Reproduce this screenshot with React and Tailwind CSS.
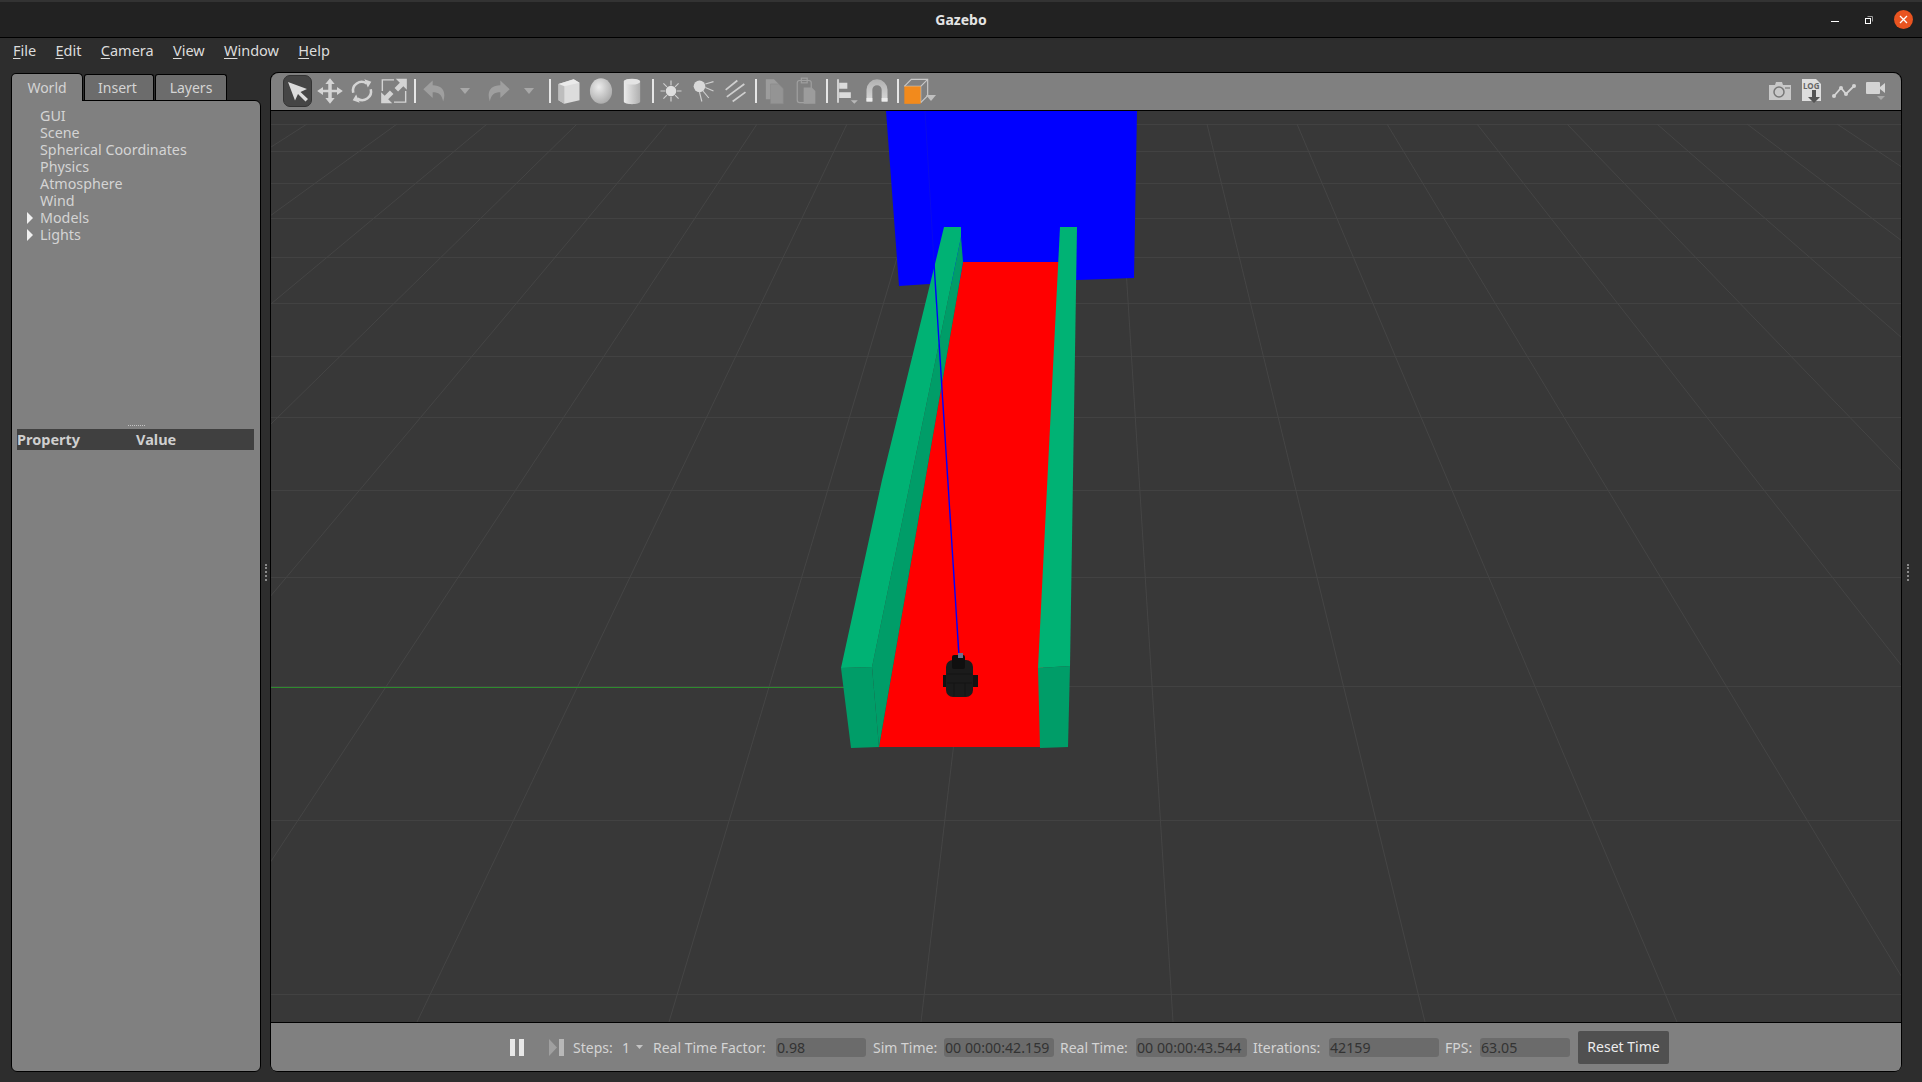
const FONT = "font-['Noto_Sans','Open_Sans',sans-serif]";

const HLINES = [124, 151, 183, 218, 257, 303, 356, 417, 490, 577, 686, 820, 994];
const RADIAL = Array.from({ length: 20 }, (_, i) => i - 10);

const MENU = [
  ["F", "ile"],
  ["E", "dit"],
  ["C", "amera"],
  ["V", "iew"],
  ["W", "indow"],
  ["H", "elp"],
];
const TREE = ["GUI", "Scene", "Spherical Coordinates", "Physics", "Atmosphere", "Wind"];

const Sep = ({ className }) => <div className={`w-[2px] h-[24px] bg-[#e6e6e6] ${className}`} />;

const Caret = ({ className, fill = "#a8a8a8" }) => (
  <svg className={className} width="10" height="6" viewBox="0 0 10 6">
    <path d="M0 0h10L5 6z" fill={fill} />
  </svg>
);

const Icon = ({ children, className = "" }) => (
  <svg className={`shrink-0 ${className}`} width="28" height="28" viewBox="0 0 24 24">
    {children}
  </svg>
);

const Toolbar = () => (
  <div className="h-[38px] shrink-0 flex items-center bg-[#808080] border-b border-black rounded-t-[8px] pl-[12px] pb-[1px]">
    {/* select */}
    <div className="w-[29px] h-[32px] rounded-[7px] bg-[#454545] border border-[#333] flex items-center justify-center">
      <svg width="24" height="24" viewBox="0 0 24 24">
        <path d="M2 3l19 7-6.500 3L22 20l-2.500 2.500-7.500-7.500-3 6.500z" fill="#dcdcdc" />
      </svg>
    </div>
    {/* move */}
    <Icon className="ml-[4px]">
      <path d="M12 1l4 5h-2.500v5H18V8.500l5 3.500-5 3.500V13h-4.500v5H16l-4 5-4-5h2.500v-5H6v2.500L1 12l5-3.500V11h4.500V6H8z" fill="#d4d4d4" />
    </Icon>
    {/* rotate */}
    <Icon className="ml-[4px]">
      <path d="M4.500 13.500A7.500 7.500 0 0 1 16 5.500M19.500 10.500A7.500 7.500 0 0 1 8 18.500" fill="none" stroke="#d4d4d4" strokeWidth="2.200" />
      <path d="M14 2l6 2-3 5zM10 22l-6-2 3-5z" fill="#d4d4d4" />
    </Icon>
    {/* scale */}
    <Icon className="ml-[4px]">
      <path d="M2 12V2.500h10M22 12v9.500H12" fill="none" stroke="#d4d4d4" strokeWidth="1.200" />
      <path d="M13.500 1.500H23v9.500l-3-3-4.500 4.500-3-3L17 5z M10.500 22.500H1V13l3 3 4.500-4.500 3 3L7 19z" fill="#d4d4d4" />
    </Icon>
    <Sep className="ml-[6px]" />
    {/* undo */}
    <Icon className="ml-[5px] opacity-60">
      <path d="M10 3L2 10.500 10 18v-5c5 0 8 2 9 8 3-9-1-14-9-14z" fill="#b4b4b4" />
    </Icon>
    <Caret className="ml-[11px]" />
    {/* redo */}
    <Icon className="ml-[14px] opacity-60">
      <path d="M14 3l8 7.500L14 18v-5c-5 0-8 2-9 8-3-9 1-14 9-14z" fill="#b4b4b4" />
    </Icon>
    <Caret className="ml-[12px]" />
    <Sep className="ml-[15px]" />
    {/* box */}
    <Icon className="ml-[4px]">
      <path d="M3 6l13-4 5 3v15l-13 3-5-3z" fill="#dcdcdc" />
      <path d="M3 6l13-4 5 3-13 3z" fill="#eaeaea" />
      <path d="M3 6l5 2v15l-5-3z" fill="#bdbdbd" />
    </Icon>
    {/* sphere */}
    <svg className="ml-[4px] shrink-0" width="28" height="28" viewBox="0 0 24 24">
      <defs>
        <radialGradient id="sph" cx="0.4" cy="0.35" r="0.7">
          <stop offset="0" stopColor="#ececec" />
          <stop offset="1" stopColor="#a8a8a8" />
        </radialGradient>
      </defs>
      <ellipse cx="12" cy="12" rx="9.500" ry="11" fill="url(#sph)" />
    </svg>
    {/* cylinder */}
    <svg className="ml-[3px] shrink-0" width="28" height="28" viewBox="0 0 24 24">
      <defs>
        <linearGradient id="cyl" x1="0" x2="1" y1="0" y2="0">
          <stop offset="0" stopColor="#ececec" />
          <stop offset="1" stopColor="#b0b0b0" />
        </linearGradient>
      </defs>
      <path d="M5 4c0-3 14-3 14 0v17c0 3-14 3-14 0z" fill="url(#cyl)" />
      <ellipse cx="12" cy="4" rx="7" ry="2.500" fill="#e4e4e4" />
    </svg>
    <Sep className="ml-[6px]" />
    {/* point light */}
    <Icon className="ml-[3px]">
      <circle cx="12" cy="12" r="4.500" fill="#dedede" />
      <path d="M12 3v4M12 17v4M3 12h4M17 12h4M5.500 5.500l3 3M15.500 15.500l3 3M18.500 5.500l-3 3M8.500 15.500l-3 3" stroke="#cfcfcf" strokeWidth="1" />
    </Icon>
    {/* spot light */}
    <Icon className="ml-[4px]">
      <circle cx="9" cy="8" r="5" fill="#d8d8d8" />
      <path d="M14 6l7-2M14 9l7 3M12 12l5 6M9 13l2 8" stroke="#cfcfcf" strokeWidth="1" />
    </Icon>
    {/* directional light */}
    <Icon className="ml-[4px]">
      <path d="M4 11L14 3M5 17L20 6M10 21L21 13" stroke="#cfcfcf" strokeWidth="1.500" />
    </Icon>
    <Sep className="ml-[6px]" />
    {/* copy */}
    <Icon className="ml-[3px]">
      <path d="M5 2h7l4 4v13H5z" fill="#9c9c9c" />
      <path d="M9 6h7l4 4v13H9z" fill="#949494" stroke="#888" strokeWidth="0.500" />
    </Icon>
    {/* paste */}
    <Icon className="ml-[4px]">
      <rect x="4.500" y="3" width="12" height="19" rx="2" fill="none" stroke="#a0a0a0" strokeWidth="1" />
      <rect x="8" y="1" width="5" height="4" fill="none" stroke="#a0a0a0" strokeWidth="1" />
      <path d="M10 9h7l3 3v11H10z" fill="#9c9c9c" />
    </Icon>
    <Sep className="ml-[6px]" />
    {/* align */}
    <svg className="ml-[3px] shrink-0" width="28" height="28" viewBox="0 0 24 24">
      <path d="M6 2v20" stroke="#dcdcdc" strokeWidth="1.500" />
      <path d="M7 5h7v5H7zM7 13h10v5H7z" fill="#dcdcdc" />
      <path d="M17 20h6l-3 3z" fill="#b8b8b8" />
    </svg>
    {/* snap */}
    <svg className="ml-[4px] shrink-0" width="28" height="28" viewBox="0 0 24 24">
      <defs>
        <linearGradient id="mag" x1="0" x2="0" y1="0" y2="1">
          <stop offset="0" stopColor="#b0b0b0" />
          <stop offset="1" stopColor="#dadada" />
        </linearGradient>
      </defs>
      <path d="M3 21V11a9 9 0 0 1 18 0v10h-5V11a4 4 0 0 0-8 0v10z" fill="url(#mag)" />
      <path d="M3 21v-3h5v3zM16 21v-3h5v3z" fill="#ececec" />
    </svg>
    <Sep className="ml-[6px]" />
    {/* view angle */}
    <svg className="ml-[3px] shrink-0" width="28" height="28" viewBox="0 0 24 24">
      <path d="M2 8l6-6h14v14l-6 6" fill="none" stroke="#c8c8c8" strokeWidth="1" />
      <path d="M2 8h14l6-6M16 8v14" fill="none" stroke="#c8c8c8" strokeWidth="1" />
      <rect x="2" y="8" width="14" height="15" fill="#f28a1c" />
    </svg>
    <Caret className="ml-[-4px] mt-[14px]" fill="#c0c0c0" />
    {/* right side tools */}
    <svg className="ml-[832px] shrink-0" width="24" height="20" viewBox="0 0 24 20">
      <path d="M1 4h6l1-3h6l1 3h8v15H1z" fill="#c8c8c8" />
      <circle cx="11" cy="11" r="5" fill="none" stroke="#777" strokeWidth="1.500" />
      <rect x="17" y="6" width="5" height="2" fill="#999" />
    </svg>
    <svg className="ml-[7px] shrink-0" width="24" height="26" viewBox="0 0 24 26">
      <path d="M3 1h14l5 5v17H3z" fill="#dedede" />
      <text x="4" y="11" fontSize="8" fontWeight="700" fill="#666" fontFamily="Noto Sans, sans-serif">LOG</text>
      <path d="M13 12h4v7h4l-6 6-6-6h4z" fill="#555" />
    </svg>
    <svg className="ml-[9px] shrink-0" width="24" height="14" viewBox="0 0 24 14">
      <path d="M2 12L9 4l5 6 8-8" fill="none" stroke="#d4d4d4" strokeWidth="1.800" />
      <circle cx="2" cy="12" r="2" fill="#d4d4d4" />
      <circle cx="9" cy="4" r="2" fill="#d4d4d4" />
      <circle cx="14" cy="10" r="2" fill="#d4d4d4" />
      <circle cx="22" cy="2" r="2" fill="#d4d4d4" />
    </svg>
    <svg className="ml-[9px] shrink-0" width="22" height="20" viewBox="0 0 22 20">
      <rect x="1" y="1" width="14" height="12" rx="1" fill="#d4d4d4" />
      <path d="M15 6l5-4v10l-5-4z" fill="#d4d4d4" />
      <path d="M12 15h8l-4 4z" fill="#a8a8a8" />
    </svg>
  </div>
);

const Scene = () => (
  <svg className="block w-full h-full" viewBox="271 111 1630 911" preserveAspectRatio="none">
    <rect x="271" y="111" width="1630" height="911" fill="#383838" />
    {HLINES.map((y) => (
      <path key={y} d={`M271 ${y + 0.5}H1901`} stroke="#424242" strokeWidth="1" />
    ))}
    {RADIAL.map((n) => (
      <path key={n} d={`M${1117 + 90 * n} 124L${1173 + 252 * n} 1022`} stroke="#454545" strokeWidth="1" />
    ))}
    <path d="M271 687.500H845" stroke="#2e8b2e" strokeWidth="1.200" />
    {/* back wall */}
    <path d="M886 111H1137L1134 278 1078 280 929 284 899 286z" fill="#0000ff" />
    <path d="M925 111L934 262" stroke="#0a0aec" strokeWidth="1" />
    {/* ground */}
    <path d="M963 262H1059L1040 747H879z" fill="#ff0000" />
    {/* left wall */}
    <path d="M961 237L963 262 879 747 872 667z" fill="#009d68" />
    <path d="M841 668L872 667 879 747 851 748z" fill="#009d68" />
    <path d="M944 227H961V237L872 667 841 668 882 480 934 268z" fill="#00b274" />
    {/* right wall */}
    <path d="M1038 668L1070 666 1068 747 1040 748z" fill="#009d68" />
    <path d="M1060 227H1077L1070 666 1038 668z" fill="#00b274" />
    {/* laser */}
    <path d="M934 263L959 656" stroke="#0000ff" strokeWidth="1.400" />
    {/* robot */}
    <rect x="943" y="675" width="4" height="12" fill="#111" />
    <rect x="973" y="675" width="5" height="12" fill="#111" />
    <rect x="946" y="660" width="27" height="37" rx="7" fill="#1b1b1b" />
    <path d="M947 674h25M947 683h25M954 683v13M965 683v13" stroke="#141414" strokeWidth="1" />
    <rect x="952" y="655" width="13" height="14" rx="2" fill="#0f0f0f" />
    <rect x="958" y="653" width="5" height="5" fill="#6f6f8c" />
  </svg>
);

const Stat = ({ label, value, labelClass, fieldClass }) => (
  <>
    <span className={`whitespace-nowrap text-[14px] text-[#d4d4d4] ${labelClass}`}>{label}</span>
    <div className={`h-[19px] rounded-[3px] bg-[#6b6b6b] text-[14.2px] leading-[19px] text-[#333333] pl-[1px] whitespace-nowrap overflow-hidden ${fieldClass}`}>
      {value}
    </div>
  </>
);

const TimePanel = () => (
  <div className="h-[49px] shrink-0 flex items-center bg-[#808080] border-t border-black rounded-b-[6px] pl-[239px]">
    <div className="flex gap-[4px] w-[14px] shrink-0">
      <div className="w-[5px] h-[17px] bg-[#e8e8e8]" />
      <div className="w-[5px] h-[17px] bg-[#e8e8e8]" />
    </div>
    <svg className="ml-[25px] shrink-0" width="15" height="17" viewBox="0 0 15 17">
      <path d="M0 0l8 8.500L0 17z" fill="#a0a0a0" />
      <rect x="10" y="0" width="5" height="17" fill="#b8b8b8" />
    </svg>
    <span className="ml-[9px] w-[45px] text-[14px] text-[#d4d4d4]">Steps:</span>
    <span className="ml-[4px] w-[8px] text-[14px] text-[#d4d4d4]">1</span>
    <Caret className="ml-[6px] w-[7px]" fill="#c4c4c4" />
    <Stat label="Real Time Factor:" value="0.98" labelClass="ml-[10px] w-[123px]" fieldClass="w-[90px]" />
    <Stat label="Sim Time:" value="00 00:00:42.159" labelClass="ml-[7px] w-[71px]" fieldClass="w-[110px]" />
    <Stat label="Real Time:" value="00 00:00:43.544" labelClass="ml-[6px] w-[76px]" fieldClass="w-[111px]" />
    <Stat label="Iterations:" value="42159" labelClass="ml-[6px] w-[76px]" fieldClass="w-[110px]" />
    <Stat label="FPS:" value="63.05" labelClass="ml-[6px] w-[35px]" fieldClass="w-[90px]" />
    <button className="ml-[8px] w-[91px] h-[33px] pb-[2px] rounded-[2px] bg-[#505050] text-[14px] text-[#ececec]">Reset Time</button>
  </div>
);

const SidePanel = () => (
  <div className="w-[250px] shrink-0 flex flex-col">
    <div className="h-[28px] flex items-end gap-[1px] text-[14px] text-[#d4d4d4]">
      <div className="w-[72px] h-[28px] pt-[3px] text-center bg-[#808080] border-t border-x border-black rounded-t-[5px] relative z-10 -mb-px">World</div>
      <div className="w-[70px] h-[26px] pt-[2px] pr-[3px] text-center bg-[#6c6c6c] border-t border-x border-black rounded-t-[3px]">Insert</div>
      <div className="w-[72px] h-[26px] pt-[2px] text-center bg-[#6c6c6c] border-t border-x border-black rounded-t-[3px]">Layers</div>
    </div>
    <div className="flex-1 bg-[#808080] border border-black rounded-tr-[6px] rounded-b-[6px] flex flex-col pt-[6px] text-[14.3px] text-[#d4d4d4]">
      <div className="h-[318px] shrink-0 pl-[28px]">
        {TREE.map((t) => (
          <div key={t} className="h-[17px] leading-[17px] whitespace-nowrap">{t}</div>
        ))}
        {["Models", "Lights"].map((t) => (
          <div key={t} className="h-[17px] leading-[17px] flex items-center relative">
            <span className="absolute left-[-13px] w-0 h-0 border-y-[6px] border-y-transparent border-l-[6px] border-l-[#f0f0f0]" />
            {t}
          </div>
        ))}
      </div>
      <div className="h-[3px] w-[17px] self-center ml-[1px] mb-[1px] border-t border-dotted border-[#c4c4c4]" />
      <div className="ml-[5px] mr-[6px] h-[21px] bg-[#404040] flex items-center font-bold text-[#cfcfcf] text-[14.5px] leading-[21px]">
        <span className="w-[119px]">Property</span>
        <span>Value</span>
      </div>
    </div>
  </div>
);

const Grip = () => <div className="w-[2px] h-[17px] border-l-2 border-dotted border-[#8a8a8a]" />;

export default function App() {
  return (
    <div className={`w-[1922px] h-[1082px] overflow-hidden flex flex-col bg-[#2d2d2d] ${FONT}`}>
      {/* window title bar */}
      <div className="h-[38px] shrink-0 bg-[#222222] border-t-2 border-t-[#333333] border-b border-b-black flex items-center pl-[915px] pr-[9px]">
        <span className="w-[92px] text-center text-[14px] font-bold text-[#e4e4e4]">Gazebo</span>
        <div className="ml-auto flex items-center">
          <div className="w-[8px] h-[1px] bg-white mt-[3px]" />
          <svg className="ml-[26px]" width="8" height="8" viewBox="0 0 8 8">
            <rect x="0.500" y="2.500" width="5" height="5" fill="none" stroke="#fff" />
            <path d="M2.500 0.500h5v5" fill="none" stroke="#999" />
          </svg>
          <div className="ml-[21px] w-[19px] h-[19px] rounded-full bg-[#e95420] flex items-center justify-center">
            <svg width="9" height="9" viewBox="0 0 9 9">
              <path d="M1 1l7 7M8 1l-7 7" stroke="#fff" strokeWidth="1.300" />
            </svg>
          </div>
        </div>
      </div>

      {/* menu bar */}
      <div className="h-[34px] shrink-0 flex items-center pl-[13px] pb-[9px] gap-[19.3px] text-[14.5px] text-[#dcdcdc]">
        {MENU.map(([first, rest]) => (
          <span key={first}>
            <span className="underline underline-offset-2">{first}</span>
            {rest}
          </span>
        ))}
      </div>

      {/* main area */}
      <div className="flex-1 flex pl-[11px] pb-[10px]">
        <SidePanel />
        <div className="w-[9px] shrink-0 flex items-center justify-end pr-[3px]">
          <Grip />
        </div>
        <div className="w-[1632px] shrink-0 flex flex-col border border-black rounded-[8px]">
          <Toolbar />
          <div className="h-[911px] shrink-0">
            <Scene />
          </div>
          <TimePanel />
        </div>
        <div className="flex-1 flex items-center pl-[5px]">
          <Grip />
        </div>
      </div>
    </div>
  );
}
